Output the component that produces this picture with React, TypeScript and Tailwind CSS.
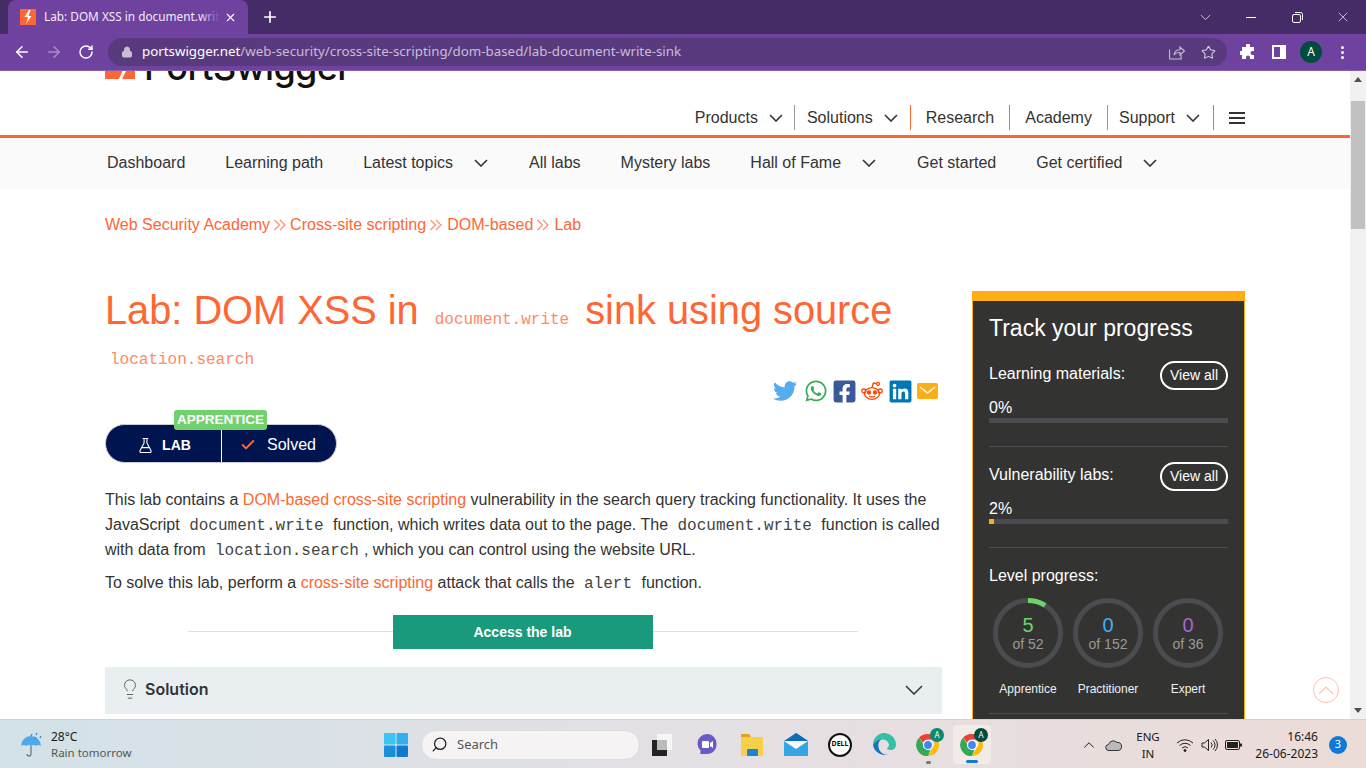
import React from 'react';
import { ArrowLeft, ArrowRight, RotateCw, X, Plus, Lock, Star, ChevronDown, ChevronUp, FlaskConical, Check, Search, Lightbulb } from 'lucide-react';
import { FaTwitter, FaWhatsapp, FaFacebookSquare, FaLinkedin } from 'react-icons/fa';

const ARIAL = 'font-["Liberation_Sans",Arial,sans-serif]';

const TOP_NAV = [
  { label: 'Products', chevron: true, cls: 'pr-[11px] border-[#999]' },
  { label: 'Solutions', chevron: true, cls: 'pl-[12px] pr-[12px] border-[#ff6633]' },
  { label: 'Research', chevron: false, cls: 'pl-[15px] pr-[15px] border-[#ff6633]' },
  { label: 'Academy', chevron: false, cls: 'pl-[15px] pr-[15px] border-[#999]' },
  { label: 'Support', chevron: true, cls: 'pl-[11px] pr-[13px] border-[#ff6633]' },
];

const SUB_NAV = [
  { label: 'Dashboard' },
  { label: 'Learning path' },
  { label: 'Latest topics', chevron: true },
  { label: 'All labs' },
  { label: 'Mystery labs' },
  { label: 'Hall of Fame', chevron: true },
  { label: 'Get started' },
  { label: 'Get certified', chevron: true },
];

const LEVELS = [
  { done: 5, total: 52, name: 'Apprentice', color: 'text-[#70d16d]', dash: '18 200' },
  { done: 0, total: 152, name: 'Practitioner', color: 'text-[#3fb0f0]', dash: '0 200' },
  { done: 0, total: 36, name: 'Expert', color: 'text-[#a566d6]', dash: '0 200' },
];

const NavChevron = () => (
  <svg width="14" height="8" viewBox="0 0 14 8" fill="none" stroke="#333" strokeWidth="1.6">
    <path d="M1 1l6 6 6-6" />
  </svg>
);

const Code = ({ children, heading }: { children: React.ReactNode; heading?: boolean }) => (
  <code className={`px-[5px] font-["Liberation_Mono",monospace] text-[16px] leading-none ${heading ? 'text-[#ff8a66]' : 'text-[#444]'}`}>{children}</code>
);

const Crumb = ({ wide }: { wide?: boolean }) => (
  <svg width="12" height="12" viewBox="0 0 12 12" fill="none" stroke="#ff8a66" strokeWidth="1.1" className={wide ? 'ml-[4px] mr-[5px]' : 'mx-[4px]'}>
    <path d="M.5 1l5 5-5 5M6 1l5 5-5 5" />
  </svg>
);

const Favicon = () => (
  <svg width="16" height="16" viewBox="0 0 16 16">
    <rect width="16" height="16" fill="#ff6633" />
    <path d="M9 1L4.500 8H8L6 15l5.500-8H8.500L10.500 1z" fill="#fff" />
  </svg>
);

function Browser() {
  return (
    <div className='relative z-10 shrink-0 font-["Noto_Sans",sans-serif]'>
      {/* tab strip */}
      <div className="flex h-[34px] bg-[#452c67]">
        <div className="ml-[8px] flex h-[34px] w-[240px] items-center rounded-t-[8px] bg-[#6f42a0] pl-[12px] pr-[8px]">
          <Favicon />
          <div className="relative ml-[8px] w-[176px] overflow-hidden whitespace-nowrap text-[11.800px] text-[#f1ecf6]">
            Lab: DOM XSS in document.write
            <span className="absolute inset-y-0 right-0 w-[20px] bg-gradient-to-r from-transparent to-[#6f42a0]" />
          </div>
          <X size={13} strokeWidth={2} className="ml-[4px] text-white" />
        </div>
        <div className="ml-[13px] flex items-center">
          <Plus size={18} strokeWidth={2.2} className="text-white" />
        </div>
        <div className="ml-auto flex items-center text-white">
          <div className="flex w-[46px] justify-center"><ChevronDown size={17} strokeWidth={1} /></div>
          <div className="flex w-[46px] justify-center"><div className="h-px w-[10px] bg-white" /></div>
          <div className="flex w-[46px] justify-center">
            <svg width="11" height="11" viewBox="0 0 11 11" fill="none" stroke="#fff" strokeWidth="1">
              <rect x="0.500" y="2.500" width="8" height="8" rx="1.500" />
              <path d="M3 .5h5.500a2 2 0 012 2V8" />
            </svg>
          </div>
          <div className="flex w-[46px] justify-center"><X size={16} strokeWidth={1} /></div>
        </div>
      </div>
      {/* toolbar */}
      <div className="flex h-[37px] items-center border-b border-b-[#8560ad] bg-[#6f42a0]">
        <div className="flex w-[108px] items-center pl-[13px]">
          <ArrowLeft size={18} strokeWidth={2} className="text-white" />
          <ArrowRight size={18} strokeWidth={2} className="ml-[14px] text-[#a88dc6]" />
          <RotateCw size={16} strokeWidth={2.2} className="ml-[15px] text-white" />
        </div>
        <div className="flex h-[28px] w-[1119px] items-center rounded-full bg-[#5a3a7e] pl-[13px] pr-[11px]">
          <Lock size={12} fill="#c9bdd4" strokeWidth={2} className="text-[#c9bdd4]" />
          <span className="ml-[9px] whitespace-nowrap text-[13.330px] text-[#c9bdd4]">
            <span className="text-white">portswigger.net</span>/web-security/cross-site-scripting/dom-based/lab-document-write-sink
          </span>
          <svg width="16" height="15" viewBox="0 0 16 15" fill="none" stroke="#c9bdd4" strokeWidth="1.100" className="ml-auto">
            <path d="M.6 4.500v9.500h11.500v-4M5 10c.5-3.500 3-5.300 6-5.300V2l4.400 4-4.400 4V7.600C8.600 7.400 6.500 8 5 10z" />
          </svg>
          <Star size={15} strokeWidth={1.700} className="ml-[16px] text-[#d8cfe0]" />
        </div>
        <svg width="16" height="16" viewBox="0 0 16 16" fill="#fff" className="ml-[13px]">
          <path d="M6 1.500a2 2 0 014 0V3h4v4h-1.500a2 2 0 000 4H14v4H10v-1.500a2 2 0 00-4 0V15H2v-4H.5a2 2 0 010-4H2V3h4z" />
        </svg>
        <svg width="14" height="14" viewBox="0 0 14 14" className="ml-[16px]">
          <rect width="14" height="14" fill="#fff" />
          <rect x="2" y="2" width="6" height="10" fill="#6f42a0" />
        </svg>
        <div className="ml-[14px] flex h-[22px] w-[22px] items-center justify-center rounded-full bg-[#004d40] text-[12px] text-white">A</div>
        <div className="ml-[19px] flex flex-col gap-[2px]">
          <span className="h-[3px] w-[3px] rounded-full bg-white" />
          <span className="h-[3px] w-[3px] rounded-full bg-white" />
          <span className="h-[3px] w-[3px] rounded-full bg-white" />
        </div>
      </div>
    </div>
  );
}

function Header() {
  return (
    <header className={ARIAL}>
      <div className="-mt-[21px] flex h-[40px] items-end pl-[105px]">
        <svg width="30" height="30" viewBox="0 0 30 30" className="mb-[11px]">
          <rect width="30" height="30" fill="#ff6633" />
          <path d="M21 22l-4 8h-3l3.500-8z" fill="#fff" />
        </svg>
        <span className='mb-[3px] ml-[9px] font-["Inter",sans-serif] text-[36px] font-medium leading-[40px] tracking-[-0.6px] text-[#111]'>PortSwigger</span>
      </div>
      <nav className="mt-[15px] flex items-center justify-end pr-[105px] text-[16px] text-[#333]">
        {TOP_NAV.map((item) => (
          <div key={item.label} className={`flex h-[25px] items-center border-r ${item.cls}`}>
            {item.label}
            {item.chevron && <span className="ml-[11px] flex"><NavChevron /></span>}
          </div>
        ))}
        <div className="ml-[15px] flex w-[16px] flex-col gap-[3px]">
          <span className="h-[2px] bg-[#333]" />
          <span className="h-[2px] bg-[#333]" />
          <span className="h-[2px] bg-[#333]" />
        </div>
      </nav>
      <div className="mt-[5px] h-[3px] bg-[#ff6633]" />
      <div className="flex h-[51px] items-center gap-[40px] bg-[#fafafa] pb-[2px] pl-[107px] text-[16px] text-[#333]">
        {SUB_NAV.map((item) => (
          <div key={item.label} className="flex items-center">
            {item.label}
            {item.chevron && <span className="ml-[21px] mr-[1px] flex"><NavChevron /></span>}
          </div>
        ))}
      </div>
    </header>
  );
}

function Sidebar() {
  return (
    <aside className="mt-[5px] w-[273px] shrink-0 border-x border-b border-t-[10px] border-[#ffad14] bg-[#333332] px-[16px] pt-[12px] pb-[40px] text-white">
      <h2 className="text-[23px] leading-[30px]">Track your progress</h2>
      <div className="mt-[20px] flex items-start justify-between">
        <span className="mt-[1px] text-[16px] leading-[20px]">Learning materials:</span>
        <span className="-mt-[2px] flex h-[29px] w-[68px] items-center justify-center rounded-full border-2 border-white text-[14px]">View all</span>
      </div>
      <div className="mt-[8px] text-[16px] leading-[20px]">0%</div>
      <div className="h-[5px] bg-[#4a4c50]" />
      <div className="mt-[23px] h-px bg-[#4a4c50]" />
      <div className="mt-[16px] flex items-start justify-between">
        <span className="mt-[2px] text-[16px] leading-[20px]">Vulnerability labs:</span>
        <span className="-mt-[1px] flex h-[29px] w-[68px] items-center justify-center rounded-full border-2 border-white text-[14px]">View all</span>
      </div>
      <div className="mt-[8px] text-[16px] leading-[20px]">2%</div>
      <div className="h-[5px] bg-[#4a4c50]">
        <div className="h-full w-[5px] bg-[#ffad14]" />
      </div>
      <div className="mt-[23px] h-px bg-[#4a4c50]" />
      <div className="mt-[18px] text-[16px] leading-[20px]">Level progress:</div>
      <div className="mt-[12px] flex gap-[10px] pl-[4px]">
        {LEVELS.map((lv) => (
          <div key={lv.name} className="relative h-[70px] w-[70px]">
            <svg width="70" height="70" viewBox="0 0 70 70" fill="none" strokeWidth="5" className="-rotate-90">
              <circle cx="35" cy="35" r="32.500" stroke="#4a4c50" />
              <circle cx="35" cy="35" r="32.500" stroke="#70d16d" strokeDasharray={lv.dash} />
            </svg>
            <div className="absolute inset-0 flex flex-col items-center justify-center">
              <span className={`text-[20px] leading-[22px] ${lv.color}`}>{lv.done}</span>
              <span className="text-[14px] leading-[17px] text-[#999]">of {lv.total}</span>
            </div>
          </div>
        ))}
      </div>
      <div className="mt-[13px] -ml-[1px] flex">
        {LEVELS.map((lv) => (
          <div key={lv.name} className="w-[80px] text-center text-[12px] leading-[16px] text-[#f0f0f0]">{lv.name}</div>
        ))}
      </div>
      <div className="mt-[16px] h-px bg-[#4a4c50]" />
    </aside>
  );
}

function Article() {
  return (
    <article className="w-[837px] shrink-0 text-[#333]">
      <h1 className="mt-[4px] text-[39.750px] font-normal leading-[40px] text-[#ff6633]">
        Lab: DOM XSS in <Code heading>document.write</Code> sink using source <Code heading>location.search</Code>
      </h1>
      <div className="mt-[10px] flex h-[22px] items-center justify-end pr-[4px]">
        <FaTwitter size={24} className="text-[#55acee]" />
        <FaWhatsapp size={24} className="ml-[7px] text-[#3daa5c]" />
        <FaFacebookSquare size={25} className="ml-[4px] text-[#3b5998]" />
        <svg width="22" height="20" viewBox="0 0 22 20" fill="none" stroke="#ff4500" strokeWidth="1.300" className="ml-[4px]">
          <ellipse cx="11" cy="12.500" rx="7.500" ry="5.800" fill="#fff" />
          <circle cx="2.800" cy="10" r="2" />
          <circle cx="19.200" cy="10" r="2" />
          <circle cx="17" cy="2.800" r="1.500" />
          <path d="M11 6.500L12.300 2l3.300.7" />
          <circle cx="8" cy="11.500" r="1.500" fill="#ff4500" />
          <circle cx="14" cy="11.500" r="1.500" fill="#ff4500" />
          <path d="M8 15c1.800 1.200 4.200 1.200 6 0" />
        </svg>
        <FaLinkedin size={25} className="ml-[5px] text-[#0077b5]" />
        <svg width="21" height="16" viewBox="0 0 21 16" className="ml-[4px]">
          <rect width="21" height="16" rx="2" fill="#ffad14" />
          <path d="M3 4l7.500 6L18 4" fill="none" stroke="#fff" strokeWidth="1.500" />
        </svg>
      </div>

      <div className="relative mt-[22px] flex h-[39px] w-[232px] items-center rounded-full border border-[#ccd] bg-[#00144f] text-white">
        <span className="absolute left-[68px] -top-[15px] flex h-[20px] w-[93px] items-center justify-center rounded-[3px] bg-[#70d16d] text-[13.500px] font-bold leading-none">APPRENTICE</span>
        <div className="flex h-full w-[115px] items-center justify-center gap-[8px] pl-[1px] pt-[3px] text-[14px] font-bold">
          <FlaskConical size={17} strokeWidth={1.500} />
          LAB
        </div>
        <div className="flex h-full items-center border-l border-white pl-[18px] pt-[3px] text-[16px]">
          <Check size={16} strokeWidth={3} className="mr-[11px] text-[#ff6633]" />
          Solved
        </div>
      </div>

      <p className="mt-[24px] text-[16px] leading-[25px]">
        This lab contains a <span className="text-[#ff6633]">DOM-based cross-site scripting</span> vulnerability in the search query tracking functionality. It uses the JavaScript <Code>document.write</Code> function, which writes data out to the page. The <Code>document.write</Code> function is called with data from <Code>location.search</Code>, which you can control using the website URL.
      </p>
      <p className="mt-[8px] text-[16px] leading-[25px]">
        To solve this lab, perform a <span className="text-[#ff6633]">cross-site scripting</span> attack that calls the <Code>alert</Code> function.
      </p>

      <div className="relative mt-[20px] flex justify-center pr-[2px]">
        <div className="absolute left-[83px] top-[16px] h-px w-[670px] bg-[#e0e0e0]" />
        <div className="relative flex h-[34px] w-[260px] items-center justify-center bg-[#1a9a7c] text-[14px] font-bold text-white">Access the lab</div>
      </div>

      <div className="mt-[18px] flex h-[47px] items-center bg-[#e9eef1] pb-[4px] pl-[14px] pr-[19px]">
        <Lightbulb size={22} strokeWidth={1} className="text-[#555]" />
        <span className='ml-[4px] font-["Inter",sans-serif] text-[16px] font-semibold text-[#333]'>Solution</span>
        <svg width="18" height="10" viewBox="0 0 18 10" fill="none" stroke="#333" strokeWidth="1.500" className="ml-auto mt-[3px]">
          <path d="M1 1l8 8 8-8" />
        </svg>
      </div>
    </article>
  );
}

function Scrollbar() {
  return (
    <div className="flex w-[16px] shrink-0 flex-col items-center bg-[#f1f1f1]">
      <div className="mt-[6px] h-0 w-0 border-x-[4px] border-b-[5px] border-x-transparent border-b-[#505050]" />
      <div className="mt-[19px] h-[128px] w-[14px] bg-[#c1c1c1]" />
      <div className="mt-auto mb-[6px] h-0 w-0 border-x-[4px] border-t-[5px] border-x-transparent border-t-[#505050]" />
    </div>
  );
}

const ChromeIcon = ({ badge }: { badge: string }) => (
  <div className="relative h-[24px] w-[24px]">
    <svg width="24" height="24" viewBox="0 0 24 24">
      <path d="M12 1a11 11 0 019.500 5.500H12a5.500 5.500 0 00-5 3.200L3.200 4.500A11 11 0 0112 1z" fill="#ea4335" />
      <path d="M21.500 6.500A11 11 0 0112 23l4.700-8.200a5.500 5.500 0 00.100-8.300z" fill="#fbbc04" />
      <path d="M3.200 4.500L7.600 12a5.500 5.500 0 006.700 5L12 23A11 11 0 013.200 4.500z" fill="#34a853" />
      <circle cx="12" cy="12" r="4.500" fill="#4285f4" stroke="#fff" strokeWidth="1.200" />
    </svg>
    <div className={`absolute -right-[4px] -top-[5px] flex h-[14px] w-[14px] items-center justify-center rounded-full text-[8px] text-white ${badge}`}>A</div>
  </div>
);

function Taskbar() {
  return (
    <div className='relative z-10 flex h-[49px] shrink-0 items-center border-t border-t-[#c9d5da] bg-gradient-to-r from-[#d2e2e8] via-[#e4e0e4] to-[#ecdcd8] pt-[1px] font-["Noto_Sans",sans-serif] text-[#1a1a1a]'>
      <div className="flex w-[384px] items-center pl-[20px]">
        <svg width="24" height="26" viewBox="0 0 24 26">
          <path d="M1 14a10 10 0 0120 0c-2-1.500-4-1.500-5 0-1.500-1.500-3.500-1.500-5 0-1.500-1.500-3.500-1.500-5 0-1.500-1.500-3.500-1.500-5 0z" fill="#4fa8ea" />
          <path d="M11 14v8a2 2 0 01-4 0" fill="none" stroke="#777" strokeWidth="1.300" />
          <path d="M12 2l-1 2M17 1l-1 2M21 4l-1 2M16 5l-1 2" stroke="#3f8fd8" strokeWidth="1.400" />
        </svg>
        <div className="ml-[7px] leading-[16px]">
          <div className="text-[12px]">28°C</div>
          <div className="text-[11.500px] text-[#555]">Rain tomorrow</div>
        </div>
      </div>
      <svg width="24" height="24" viewBox="0 0 24 24">
        <rect width="11.500" height="11.500" rx="1" fill="#3cc4f2" />
        <rect x="12.500" width="11.500" height="11.500" rx="1" fill="#2fb0ec" />
        <rect y="12.500" width="11.500" height="11.500" rx="1" fill="#1a8fdc" />
        <rect x="12.500" y="12.500" width="11.500" height="11.500" rx="1" fill="#0f7ad0" />
      </svg>
      <div className="ml-[13px] flex h-[30px] w-[219px] items-center rounded-full border border-[#dcdcdc] bg-[#f5f3f4] pl-[9px] text-[13px] text-[#555]">
        <Search size={17} strokeWidth={1.800} className="-scale-x-100 text-[#222]" />
        <span className="ml-[9px]">Search</span>
      </div>
      <div className="ml-[12px] flex w-[20px] justify-center">
        <svg width="20" height="24" viewBox="0 0 20 24">
          <rect x="5" y="1" width="15" height="16" fill="#f6f6f6" />
          <rect y="7" width="15" height="16" fill="#222" />
          <rect x="5" y="7" width="10" height="10" fill="#bbb" />
        </svg>
      </div>
      <div className="ml-[23px] flex w-[24px] justify-center">
        <svg width="20" height="24" viewBox="0 0 20 24">
          <path d="M10 1a9.500 9.500 0 019.500 10.500c0 5.500-4 9.500-9.500 9.500H3c.5-1 .8-2 .5-3.500A10 10 0 01.500 11 9.500 9.500 0 0110 1z" fill="#6a5bc8" />
          <rect x="5" y="8" width="7" height="7" rx="1" fill="#fff" />
          <path d="M13 10l3-2v7l-3-2z" fill="#fff" />
        </svg>
      </div>
      <div className="ml-[21px] flex w-[24px] justify-center">
        <svg width="24" height="24" viewBox="0 0 24 24">
          <path d="M1 1h8l2 3H1z" fill="#e0a31e" />
          <rect x="1" y="4" width="22" height="19" fill="#f7cf48" />
          <rect x="7" y="16" width="11" height="7" rx="1" fill="#1c84d0" />
        </svg>
      </div>
      <div className="ml-[20px] flex w-[24px] justify-center">
        <svg width="24" height="24" viewBox="0 0 24 24">
          <path d="M12 0L24 8v15H4z" fill="#0f6cbd" />
          <rect x="0" y="8" width="24" height="15" fill="#35a5e5" />
          <path d="M0 8l12 8 12-8-12-3z" fill="#fff" />
          <path d="M0 8l12-8 12 8" fill="#0f6cbd" />
          <path d="M5 8h14l-7 5z" fill="#eef6fb" />
        </svg>
      </div>
      <div className="ml-[20px] flex w-[24px] justify-center">
        <div className="flex h-[24px] w-[24px] items-center justify-center rounded-full border-2 border-[#111] bg-white text-[7px] font-bold text-[#111]">DELL</div>
      </div>
      <div className="ml-[20px] flex w-[24px] justify-center">
        <svg width="24" height="24" viewBox="0 0 24 24">
          <path d="M12 0a12 12 0 0112 12c0 3-2.500 5-5.500 5-2 0-3.500-1-3.500-2 2-1 2.500-3 1.500-5C15 7 12 6 9 6.500 5.500 7 3 9.500 1 12 1 5 6 0 12 0z" fill="#35c1a5" />
          <path d="M1 12c1.500-3 5-5.500 8.500-5.500C6.500 8 5.500 12 7 16c1.200 3.500 5 6 9 5.500A12 12 0 011 12z" fill="#1472c4" />
        </svg>
      </div>
      <div className="relative ml-[20px] flex w-[24px] flex-col items-center">
        <ChromeIcon badge="bg-[#0b8a6f]" />
        <span className="absolute -bottom-[7px] h-[3px] w-[5px] rounded-full bg-[#777]" />
      </div>
      <div className="relative ml-[13px] flex h-[39px] w-[38px] items-center justify-center rounded-[4px] bg-[#f3ebe8]">
        <ChromeIcon badge="bg-[#004d40]" />
        <span className="absolute bottom-[1px] h-[3px] w-[12px] rounded-full bg-[#0f7ad0]" />
      </div>
      <div className="ml-[89px] flex items-center">
        <ChevronUp size={18} strokeWidth={1.300} />
        <svg width="17" height="12" viewBox="0 0 17 12" fill="#bbb" stroke="#333" strokeWidth="1" className="ml-[7px]">
          <path d="M4 11.500a3 3 0 01-.5-6A5 5 0 0112 3.500a4 4 0 011 8z" />
        </svg>
        <div className="ml-[7px] w-[38px] text-center text-[11.500px] leading-[17px]">ENG<br />IN</div>
        <svg width="18" height="14" viewBox="0 0 18 14" fill="none" stroke="#222" strokeWidth="1" className="ml-[9px]">
          <path d="M1 5a11.500 11.500 0 0116 0M3.500 7.500a8 8 0 0111 0M6 10a4.500 4.500 0 016 0" />
          <circle cx="9" cy="12.500" r="1" fill="#222" />
        </svg>
        <svg width="17" height="14" viewBox="0 0 17 14" fill="none" stroke="#222" strokeWidth="1" className="ml-[7px]">
          <path d="M1 5v4h2.500L7.500 12.500V1.500L3.500 5zM10 4.500a3.500 3.500 0 010 5M12 2.500a6 6 0 010 9M14 1a8.500 8.500 0 010 12" />
        </svg>
        <svg width="17" height="10" viewBox="0 0 17 10" className="ml-[7px]">
          <rect x="0.500" y="0.500" width="14" height="9" rx="1.500" fill="none" stroke="#222" />
          <rect x="2" y="2" width="11" height="6" fill="#222" />
          <rect x="15" y="3.500" width="2" height="3" fill="#222" />
        </svg>
        <div className="w-[76px] text-right text-[12px] leading-[17px]">16:46<br />26-06-2023</div>
        <div className="ml-[11px] flex h-[18px] w-[18px] items-center justify-center rounded-full bg-[#0f7ad6] text-[11px] text-white">3</div>
      </div>
    </div>
  );
}

export default function App() {
  return (
    <div className={`flex h-[768px] w-[1366px] flex-col overflow-hidden bg-white ${ARIAL}`}>
      <Browser />
      <main className="flex min-h-0 flex-1">
        <div className="relative min-w-0 flex-1 overflow-hidden">
          <Header />
          <div className="flex flex-col pl-[105px]">
            <div className="mt-[26px] flex h-[20px] items-center text-[16px] text-[#ff6633]">
              Web Security Academy<Crumb />Cross-site scripting<Crumb wide />DOM-based<Crumb wide />Lab
            </div>
            <div className="mt-[51px] flex gap-[30px]">
              <Article />
              <Sidebar />
            </div>
          </div>
          <div className="absolute right-[11px] bottom-[16px] flex h-[26px] w-[26px] items-center justify-center rounded-full border border-[#ffc0a8]">
            <svg width="16" height="9" viewBox="0 0 16 9" fill="none" stroke="#ffc0a8" strokeWidth="1.200">
              <path d="M1 8l7-7 7 7" />
            </svg>
          </div>
        </div>
        <Scrollbar />
      </main>
      <Taskbar />
    </div>
  );
}
